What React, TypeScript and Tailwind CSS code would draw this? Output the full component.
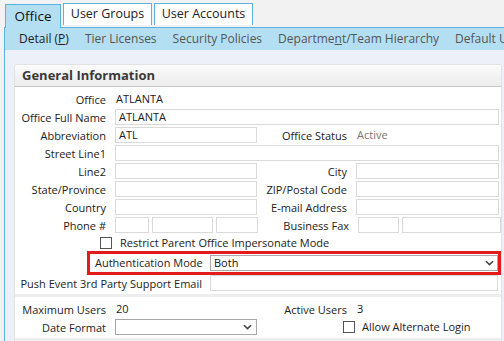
import React from "react";

const font = { fontFamily: '"Open Sans", "Noto Sans", Arial, sans-serif' };

const Chevron = () => (
  <svg width="9" height="6" viewBox="0 0 9 6" className="shrink-0">
    <path d="M1 1.2 L4.5 4.6 L8 1.2" fill="none" stroke="#444" strokeWidth="1.6" />
  </svg>
);

function Input({ w, value }: { w: string; value?: string }) {
  return (
    <div className={`${w} h-[16px] border border-[#dadada] bg-white flex items-center px-[3px] text-[11px] text-[#222]`}>
      {value}
    </div>
  );
}

function Label({ children, w = "w-[91px]" }: { children: React.ReactNode; w?: string }) {
  return <div className={`${w} shrink-0 whitespace-nowrap text-right text-[11px] text-[#222] leading-none`}>{children}</div>;
}

function Row({ children }: { children: React.ReactNode }) {
  return <div className="h-[18px] flex items-center">{children}</div>;
}

export default function App() {
  return (
    <div style={font} className="w-[504px] h-[341px] overflow-hidden bg-[#f2f2f2] relative">
      {/* tabs */}
      <div className="flex items-end h-[27px] pl-[5px] gap-[2px]">
        <div className="h-[24px] w-[56px] bg-[#b4dff2] border border-b-0 border-[#5ab4e0] flex items-center justify-center text-[13.5px] text-[#111] relative top-[1px]">
          Office
        </div>
        <div className="h-[22px] w-[89px] bg-white border border-b-0 border-[#5ab4e0] flex items-center justify-center text-[12.5px] text-[#222] mb-[2px]">
          User Groups
        </div>
        <div className="h-[22px] w-[99px] bg-white border border-b-0 border-[#5ab4e0] flex items-center justify-center text-[12.5px] text-[#222] mb-[2px]">
          User Accounts
        </div>
      </div>
      <div className="ml-[4px] border-l border-[#5ab4e0]">
        {/* subnav */}
        <div className="h-[23px] bg-[#b4dff2] border-t border-[#5ab4e0] flex items-center pl-[14px] text-[12px] text-[#555] whitespace-nowrap overflow-hidden">
          <span className="text-[#222] mr-[16px]">
            Detail (<span className="underline">P</span>)
          </span>
          <span className="mr-[16px]">Tier Licenses</span>
          <span className="mr-[16px]">Security Policies</span>
          <span className="mr-[16px]">
            Departme<span className="underline">n</span>t/Team Hierarchy
          </span>
          <span>Default User</span>
        </div>
        {/* content */}
        <div className="bg-[#edf0f8] h-[300px] pt-[14px] pl-[9px]">
          <div className="w-[488px] bg-white border border-[#e2e2e2] rounded-t-[2px]">
            <div className="h-[22px] bg-gradient-to-b from-[#fbfbfb] to-[#ececec] border-b border-[#c6c6c6] flex items-center pl-[7px] text-[13px] font-bold text-[#3a3a3a]">
              General Information
            </div>
            <div className="pt-[3px]">
              <Row>
                <Label>Office</Label>
                <div className="ml-[10px] text-[11px] text-[#222]">ATLANTA</div>
              </Row>
              <Row>
                <Label>Office Full Name</Label>
                <div className="ml-[9px]">
                  <Input w="w-[384px]" value="ATLANTA" />
                </div>
              </Row>
              <Row>
                <Label>Abbreviation</Label>
                <div className="ml-[9px]">
                  <Input w="w-[142px]" value="ATL" />
                </div>
                <Label w="w-[90px]">Office Status</Label>
                <div className="ml-[10px] text-[11px] text-[#777]">Active</div>
              </Row>
              <Row>
                <Label>Street Line1</Label>
                <div className="ml-[9px]">
                  <Input w="w-[384px]" />
                </div>
              </Row>
              <Row>
                <Label>Line2</Label>
                <div className="ml-[9px]">
                  <Input w="w-[142px]" />
                </div>
                <Label w="w-[90px]">City</Label>
                <div className="ml-[9px]">
                  <Input w="w-[143px]" />
                </div>
              </Row>
              <Row>
                <Label>State/Province</Label>
                <div className="ml-[9px]">
                  <Input w="w-[142px]" />
                </div>
                <Label w="w-[90px]">ZIP/Postal Code</Label>
                <div className="ml-[9px]">
                  <Input w="w-[143px]" />
                </div>
              </Row>
              <Row>
                <Label>Country</Label>
                <div className="ml-[9px]">
                  <Input w="w-[142px]" />
                </div>
                <Label w="w-[90px]">E-mail Address</Label>
                <div className="ml-[9px]">
                  <Input w="w-[143px]" />
                </div>
              </Row>
              <Row>
                <Label>Phone #</Label>
                <div className="ml-[9px] flex gap-[3px]">
                  <Input w="w-[34px]" />
                  <Input w="w-[61px]" />
                  <Input w="w-[42px]" />
                </div>
                <Label w="w-[91px]">Business Fax</Label>
                <div className="ml-[9px] flex gap-[3px]">
                  <Input w="w-[41px]" />
                  <Input w="w-[99px]" />
                </div>
              </Row>
              <div className="h-[18px] flex items-center pl-[85px]">
                <div className="w-[12px] h-[12px] border border-[#555] bg-white" />
                <div className="ml-[8px] text-[11px] text-[#222]">Restrict Parent Office Impersonate Mode</div>
              </div>
              <div className="ml-[72px] -mt-[1px] h-[24px] border-[3px] border-[#e41b1b] flex items-center">
                <div className="pl-[5px] w-[120px] whitespace-nowrap text-[11px] text-[#222]">Authentication Mode</div>
                <div className="w-[288px] h-[16px] border border-[#a8a8a8] bg-white flex items-center justify-between px-[3px] text-[11px] text-[#111]">
                  <span>Both</span>
                  <Chevron />
                </div>
              </div>
              <div className="h-[18px] flex items-center -mt-[1px]">
                <Label w="w-[187px]">Push Event 3rd Party Support Email</Label>
                <div className="ml-[8px]">
                  <Input w="w-[288px]" />
                </div>
              </div>
            </div>
            <div className="h-[3px] mt-[2px] bg-[#eeeeee]" />
            <div className="pt-[3px]">
              <Row>
                <Label>Maximum Users</Label>
                <div className="ml-[9px] w-[142px] pl-[1px] text-[11px] text-[#222]">20</div>
                <Label w="w-[90px]">Active Users</Label>
                <div className="ml-[10px] text-[11px] text-[#222]">3</div>
              </Row>
              <Row>
                <Label>Date Format</Label>
                <div className="ml-[9px] w-[142px] h-[16px] border border-[#a8a8a8] bg-white flex items-center justify-end px-[4px]">
                  <Chevron />
                </div>
                <div className="ml-[86px] w-[12px] h-[12px] border border-[#555] bg-white" />
                <div className="ml-[7px] text-[11px] text-[#222]">Allow Alternate Login</div>
              </Row>
            </div>
            <div className="h-[3px] mt-[2px] bg-[#eeeeee]" />
          </div>
        </div>
      </div>
    </div>
  );
}
